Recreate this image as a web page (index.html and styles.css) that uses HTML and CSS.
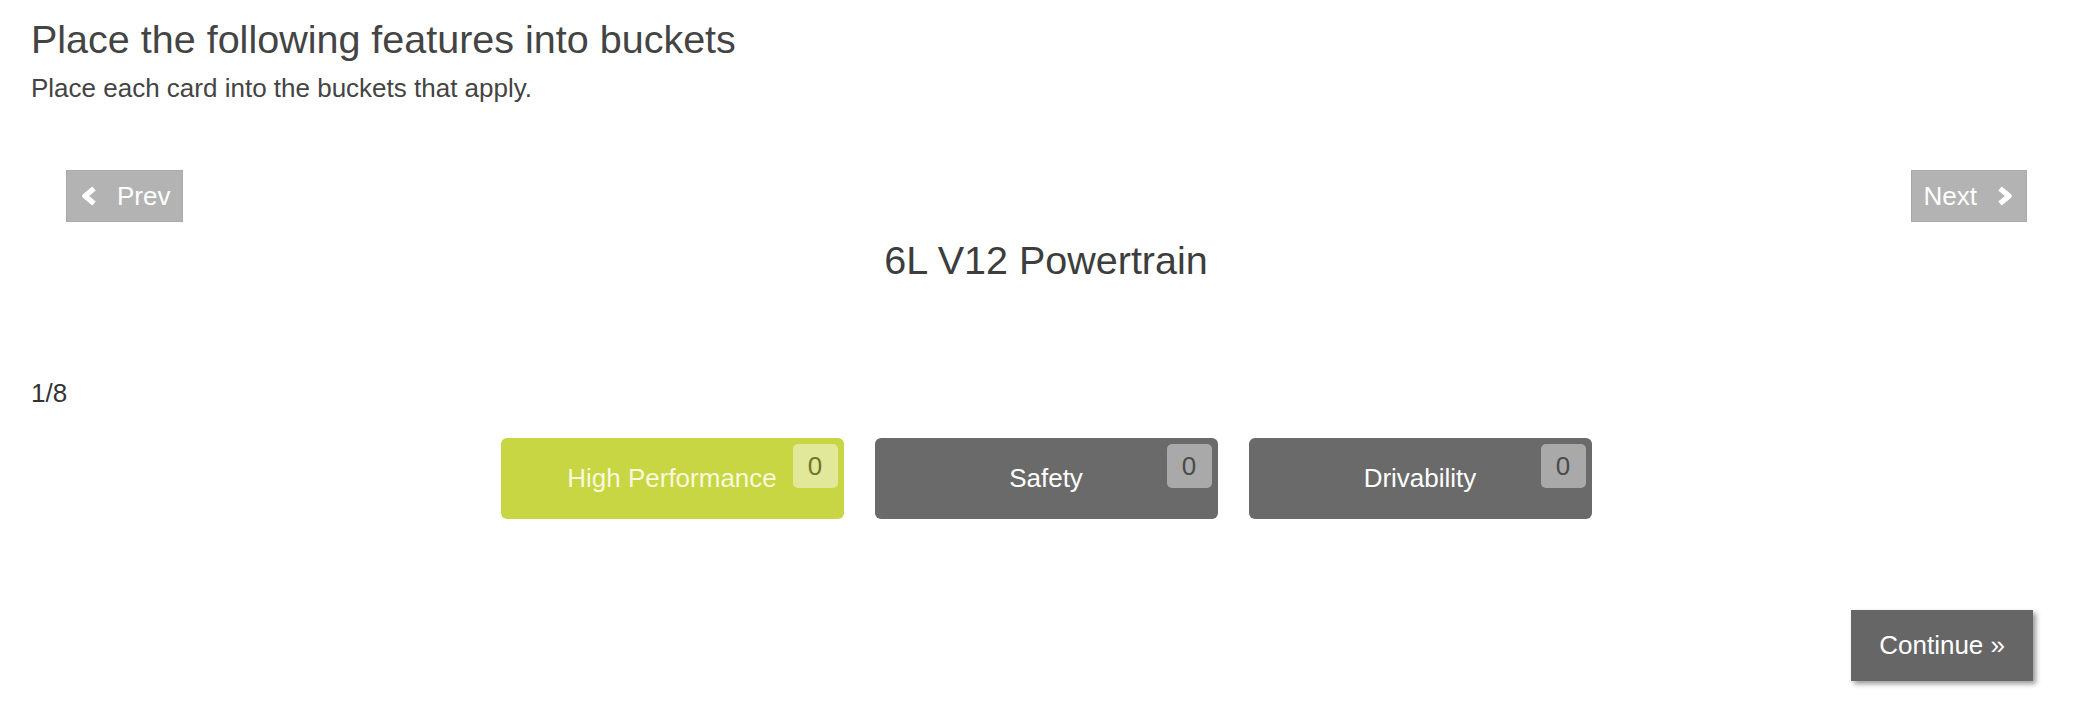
FILE: index.html
```html
<html>
<head>
<meta charset="utf-8"/>
<title>Buckets</title>
<link rel="stylesheet" href="styles.css">
</head>
<body>

<div class="page">
	<h1>Place the following features into buckets</h1>
	<p class="intro">Place each card into the buckets that apply.</p>

	<div class="cardnav">
		<button class="navbtn">
			<svg class="chev" viewBox="0 0 18 22" width="18" height="22"><polyline points="14,3.5 5,11 14,18.5"/></svg>
			<span>Prev</span>
		</button>
		<button class="navbtn next">
			<span>Next</span>
			<svg class="chev" viewBox="0 0 18 22" width="18" height="22"><polyline points="4,3.5 13,11 4,18.5"/></svg>
		</button>
	</div>

	<div class="card">6L V12 Powertrain</div>

	<div class="counter">1/8</div>

	<div class="buckets">
		<div class="bucket active">High Performance<span class="count">0</span></div>
		<div class="bucket">Safety<span class="count">0</span></div>
		<div class="bucket">Drivability<span class="count">0</span></div>
	</div>

	<div class="footer">
		<button class="continue">Continue &raquo;</button>
	</div>
</div>

</body>
</html>
```

FILE: styles.css
```css
body {
	margin: 0;
	font-family: "Liberation Sans", Arial, sans-serif;
	color: #444;
	background: #fff;
}
.page {
	padding: 15px 31px 0 31px;
}
h1 {
	margin: 0;
	font-size: 39.5px;
	line-height: 48px;
	font-weight: normal;
}
.intro {
	margin: 9px 0 0 0;
	font-size: 26px;
	line-height: 32px;
}
/* card navigation */
.cardnav {
	display: flex;
	justify-content: space-between;
	margin: 66px 34px 0 35px;
}
.navbtn {
	display: flex;
	align-items: center;
	gap: 19px;
	height: 52px;
	padding: 0 12px 0 13px;
	background: #b3b3b3;
	border: 1px solid #a9a9a9;
	color: #fff;
	font-family: inherit;
	font-size: 26px;
}
.navbtn.next {
	padding: 0 12px 0 12px;
	gap: 19px;
}
.chev polyline {
	fill: none;
	stroke: #fff;
	stroke-width: 5.5;
	stroke-linejoin: round;
}
.card {
	margin-top: 14px;
	text-align: center;
	font-size: 39.5px;
	line-height: 48px;
	color: #3d3d3d;
}
.counter {
	margin-top: 93px;
	font-size: 26px;
	line-height: 32px;
	color: #333;
}
/* buckets */
.buckets {
	display: flex;
	justify-content: center;
	gap: 31px;
	margin-top: 29px;
}
.bucket {
	position: relative;
	width: 343px;
	height: 81px;
	line-height: 81px;
	border-radius: 6px;
	background: #6a6a6a;
	color: #fff;
	font-size: 26px;
	text-align: center;
}
.bucket.active {
	background: #c8d644;
	color: #f7f9dd;
}
.count {
	position: absolute;
	top: 6px;
	right: 6px;
	width: 45px;
	height: 44px;
	line-height: 44px;
	border-radius: 5px;
	background: #a9a9a9;
	color: #4a4a4a;
}
.active .count {
	background: #e1e899;
	color: #70742f;
}
/* footer */
.footer {
	display: flex;
	justify-content: flex-end;
	margin-top: 91px;
}
.continue {
	height: 71px;
	margin-right: 28px;
	padding: 0 28px;
	background: #666;
	border: none;
	color: #fff;
	font-family: inherit;
	font-size: 26px;
	box-shadow: 3px 3px 5px rgba(0, 0, 0, .4);
}
```
